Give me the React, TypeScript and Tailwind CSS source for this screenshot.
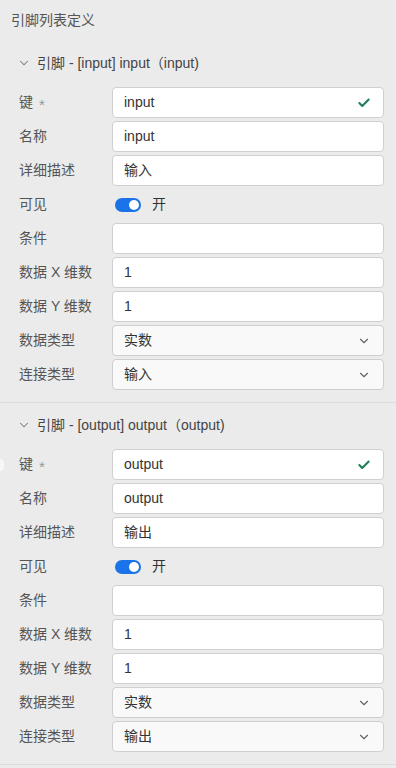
import { Check, ChevronDown } from 'lucide-react';

type Field =
  | { kind: 'text'; label: string; value: string; required?: boolean; valid?: boolean }
  | { kind: 'toggle'; label: string; on: boolean }
  | { kind: 'select'; label: string; value: string };

type Pin = { key: string; title: string; fields: Field[] };

const pins: Pin[] = [
  {
    key: 'input',
    title: '引脚 - [input] input（input)',
    fields: [
      { kind: 'text', label: '键', value: 'input', required: true, valid: true },
      { kind: 'text', label: '名称', value: 'input' },
      { kind: 'text', label: '详细描述', value: '输入' },
      { kind: 'toggle', label: '可见', on: true },
      { kind: 'text', label: '条件', value: '' },
      { kind: 'text', label: '数据 X 维数', value: '1' },
      { kind: 'text', label: '数据 Y 维数', value: '1' },
      { kind: 'select', label: '数据类型', value: '实数' },
      { kind: 'select', label: '连接类型', value: '输入' },
    ],
  },
  {
    key: 'output',
    title: '引脚 - [output] output（output)',
    fields: [
      { kind: 'text', label: '键', value: 'output', required: true, valid: true },
      { kind: 'text', label: '名称', value: 'output' },
      { kind: 'text', label: '详细描述', value: '输出' },
      { kind: 'toggle', label: '可见', on: true },
      { kind: 'text', label: '条件', value: '' },
      { kind: 'text', label: '数据 X 维数', value: '1' },
      { kind: 'text', label: '数据 Y 维数', value: '1' },
      { kind: 'select', label: '数据类型', value: '实数' },
      { kind: 'select', label: '连接类型', value: '输出' },
    ],
  },
];

function FieldRow({ field }: { field: Field }) {
  return (
    <div className="flex h-[31px] items-center">
      <div className="flex w-[93px] shrink-0 items-center text-[14px] text-[#555]">
        {field.label}
        {field.kind === 'text' && field.required && (
          <span className="relative top-[3px] ml-[6px] text-[15px] text-[#999]">*</span>
        )}
      </div>
      {field.kind === 'toggle' ? (
        <div className="flex items-center gap-[11px] pl-[3px]">
          <div className="flex h-[14px] w-[26px] items-center justify-end rounded-full bg-[#1a73e8] pr-[2px]">
            <div className="h-[10px] w-[10px] rounded-full bg-white" />
          </div>
          <span className="text-[14px] text-[#333]">开</span>
        </div>
      ) : (
        <div
          className={
            'flex h-[31px] w-[272px] items-center rounded-[4px] border border-[#cfcfcf] pl-[11px] pr-[12px] ' +
            (field.kind === 'select' ? 'bg-[#f9f9f9]' : 'bg-white')
          }
        >
          <span className="flex-1 text-[14px] text-[#333]">{field.value}</span>
          {field.kind === 'text' && field.valid && (
            <Check size={14} strokeWidth={3.5} className="text-[#1e7e55]" />
          )}
          {field.kind === 'select' && (
            <ChevronDown size={14} strokeWidth={2} className="text-[#666]" />
          )}
        </div>
      )}
    </div>
  );
}

export default function App() {
  return (
    <div
      className="relative min-h-[768px] w-[396px] bg-[#ebebeb]"
      style={{ fontFamily: '"Liberation Sans", "Noto Sans CJK SC", sans-serif' }}
    >
      <div className="flex h-[32px] items-end pb-[1px] pl-[11px] text-[14px] text-[#555]">
        引脚列表定义
      </div>

      {pins.map((pin, i) => (
        <div
          key={pin.key}
          className={
            'border-b border-[#dcdcdc] pb-[12px] pl-[19px] pr-[11px] ' +
            (i === 0 ? 'pt-[19px]' : 'pt-[10px]')
          }
        >
          <div className="flex h-[24px] items-center gap-[6px] text-[14px] text-[#444]">
            <ChevronDown size={14} strokeWidth={1.75} className="-ml-[2px] text-[#777]" />
            <span>{pin.title}</span>
          </div>
          <div className="mt-[12px] flex flex-col gap-[3px]">
            {pin.fields.map((f, j) => (
              <FieldRow key={j} field={f} />
            ))}
          </div>
        </div>
      ))}

      <div className="absolute left-[-4px] top-[459px] h-[12px] w-[8px] rounded-full bg-[#f7f7f7]" />
    </div>
  );
}
